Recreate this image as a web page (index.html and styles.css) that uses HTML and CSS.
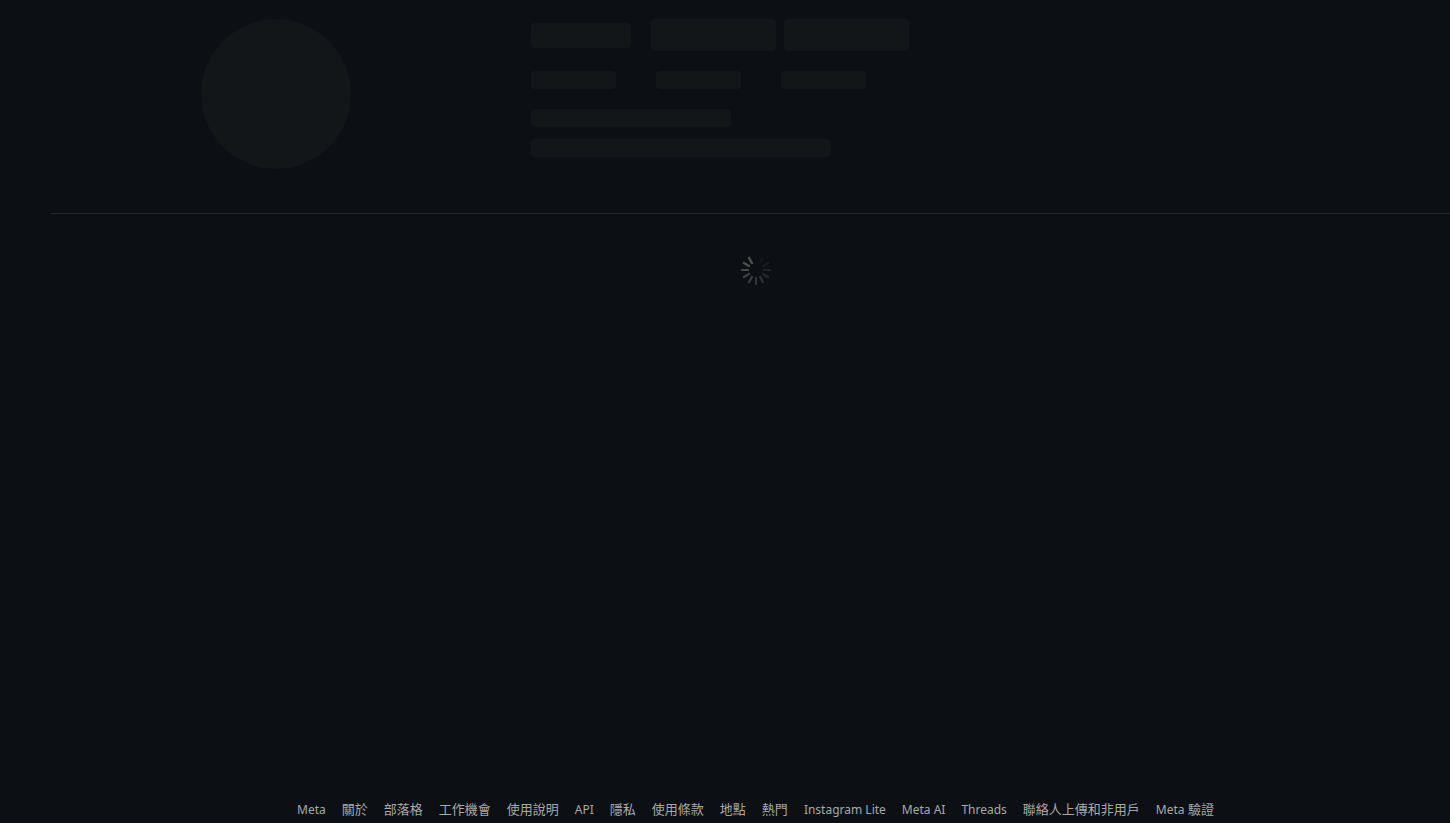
FILE: index.html
```html
<!DOCTYPE html>
<html lang="zh-Hant">
<head>
<meta charset="utf-8">
<meta name="viewport" content="width=device-width, initial-scale=1">
<title>Instagram</title>
<link rel="stylesheet" href="styles.css">
</head>
<body>
<div class="page">
  <main class="main" aria-busy="true">
    <header class="profile">
      <div class="bone avatar"></div>
      <div class="info">
        <div class="row row-actions">
          <div class="bone name"></div>
          <div class="buttons">
            <div class="bone action"></div>
            <div class="bone action"></div>
          </div>
        </div>
        <div class="row row-stats">
          <div class="bone stat"></div>
          <div class="bone stat"></div>
          <div class="bone stat"></div>
        </div>
        <div class="bio">
          <div class="bone line-short"></div>
          <div class="bone line-long"></div>
        </div>
      </div>
    </header>
    <section class="posts">
      <svg class="spinner" viewBox="0 0 100 100" role="img" aria-label="載入中">
        <g fill="currentColor">
          <rect x="72" y="46.5" width="25" height="7" rx="2" opacity="0" transform="rotate(-90 50 50)"/>
          <rect x="72" y="46.5" width="25" height="7" rx="2" opacity=".1" transform="rotate(-60 50 50)"/>
          <rect x="72" y="46.5" width="25" height="7" rx="2" opacity=".19" transform="rotate(-30 50 50)"/>
          <rect x="72" y="46.5" width="25" height="7" rx="2" opacity=".28"/>
          <rect x="72" y="46.5" width="25" height="7" rx="2" opacity=".37" transform="rotate(30 50 50)"/>
          <rect x="72" y="46.5" width="25" height="7" rx="2" opacity=".46" transform="rotate(60 50 50)"/>
          <rect x="72" y="46.5" width="25" height="7" rx="2" opacity=".54" transform="rotate(90 50 50)"/>
          <rect x="72" y="46.5" width="25" height="7" rx="2" opacity=".62" transform="rotate(120 50 50)"/>
          <rect x="72" y="46.5" width="25" height="7" rx="2" opacity=".7" transform="rotate(150 50 50)"/>
          <rect x="72" y="46.5" width="25" height="7" rx="2" opacity=".8" transform="rotate(180 50 50)"/>
          <rect x="72" y="46.5" width="25" height="7" rx="2" opacity=".88" transform="rotate(210 50 50)"/>
          <rect x="72" y="46.5" width="25" height="7" rx="2" opacity=".96" transform="rotate(240 50 50)"/>
        </g>
      </svg>
    </section>
  </main>
  <footer class="footer">
    <nav class="links">
      <a href="#"><span class="latin">Meta</span></a>
      <a href="#">關於</a>
      <a href="#">部落格</a>
      <a href="#">工作機會</a>
      <a href="#">使用說明</a>
      <a href="#"><span class="latin">API</span></a>
      <a href="#">隱私</a>
      <a href="#">使用條款</a>
      <a href="#">地點</a>
      <a href="#">熱門</a>
      <a href="#"><span class="latin">Instagram Lite</span></a>
      <a href="#"><span class="latin">Meta AI</span></a>
      <a href="#"><span class="latin">Threads</span></a>
      <a href="#">聯絡人上傳和非用戶</a>
      <a href="#"><span class="latin">Meta</span> 驗證</a>
    </nav>
  </footer>
</div>
</body>
</html>
```
FILE: styles.css
```css
* {
  box-sizing: border-box;
}

body {
  margin: 0;
  background: #0c1014;
  color: #a8a8a8;
  font-family: "Noto Sans", "Noto Sans CJK TC", sans-serif;
  font-size: 13px;
  line-height: 16px;
}

.page {
  display: flex;
  flex-direction: column;
  min-height: 100vh;
  padding-left: 51px;
}

.main {
  flex: 1;
}

.bone {
  border-radius: 4px;
  background: #121618;
}

.profile {
  display: flex;
  gap: 180px;
  padding: 19px 0 44px 150px;
  border-bottom: 1px solid #25282a;
}

.avatar {
  flex: none;
  width: 150px;
  height: 150px;
  border-radius: 50%;
}

.info {
  display: flex;
  flex-direction: column;
  gap: 20px;
}

.row {
  display: flex;
  align-items: center;
}

.row-actions {
  gap: 20px;
}

.row-stats {
  gap: 40px;
}

.buttons {
  display: flex;
  gap: 8px;
}

.name {
  width: 100px;
  height: 25px;
}

.action {
  width: 125px;
  height: 32px;
}

.stat {
  width: 85px;
  height: 18px;
}

.bio {
  display: flex;
  flex-direction: column;
  gap: 12px;
}

.line-short {
  width: 200px;
  height: 18px;
}

.line-long {
  width: 300px;
  height: 18px;
}

.posts {
  display: flex;
  justify-content: center;
  padding: 40px 0 40px 11px;
}

.spinner {
  width: 32px;
  height: 32px;
  color: #555555;
}

.footer {
  padding: 0 0 5px 10px;
}

.links {
  display: flex;
  flex-wrap: wrap;
  justify-content: center;
  gap: 8px 16px;
}

.links a {
  color: inherit;
  text-decoration: none;
  white-space: nowrap;
}

.latin {
  font-size: 12px;
}
```
